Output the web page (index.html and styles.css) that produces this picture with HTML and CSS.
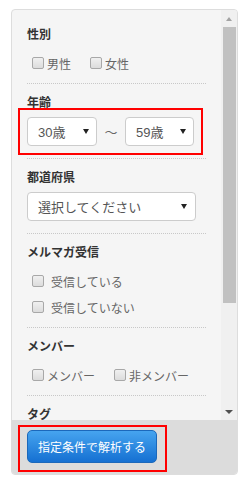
FILE: index.html
```html
<!DOCTYPE html>
<html lang="ja">
<head>
    <meta charset="UTF-8">
    <meta name="viewport" content="width=device-width, initial-scale=1.0">
    <title>絞り込み条件</title>
    <link rel="stylesheet" href="styles.css">
</head>
<body>
    <div class="panel">
        <div class="scroller">
            <div class="content">
                <section class="group">
                    <h3>性別</h3>
                    <div class="checks inline">
                        <label class="check"><span class="box"></span>男性</label>
                        <label class="check"><span class="box"></span>女性</label>
                    </div>
                </section>

                <section class="group with-select">
                    <h3>年齢</h3>
                    <div class="range">
                        <div class="select short"><span>30歳</span><span class="caret"></span></div>
                        <span class="tilde">～</span>
                        <div class="select short second"><span>59歳</span><span class="caret"></span></div>
                    </div>
                </section>

                <section class="group with-select">
                    <h3>都道府県</h3>
                    <div class="select wide"><span>選択してください</span><span class="caret"></span></div>
                </section>

                <section class="group">
                    <h3>メルマガ受信</h3>
                    <div class="checks list">
                        <label class="check"><span class="box"></span>受信している</label>
                        <label class="check"><span class="box"></span>受信していない</label>
                    </div>
                </section>

                <section class="group">
                    <h3>メンバー</h3>
                    <div class="checks inline">
                        <label class="check"><span class="box"></span>メンバー</label>
                        <label class="check"><span class="box"></span>非メンバー</label>
                    </div>
                </section>

                <section class="group last">
                    <h3>タグ</h3>
                </section>
            </div>

            <div class="scrollbar">
                <div class="step up"></div>
                <div class="track"><div class="thumb"></div></div>
                <div class="step down"></div>
            </div>
        </div>

        <div class="footer">
            <div class="mark">
                <button class="submit" type="button">指定条件で解析する</button>
            </div>
        </div>
    </div>
</body>
</html>
```

FILE: styles.css
```css
body {
    margin: 0;
    background: #fff;
    font-family: "Liberation Sans", "Noto Sans CJK JP", sans-serif;
    color: #555;
}

.panel {
    box-sizing: border-box;
    width: 227px;
    height: 466px;
    margin: 9px 0 0 11px;
    border: 1px solid #ddd;
    border-radius: 4px;
    overflow: hidden;
    display: flex;
    flex-direction: column;
    background: #f5f5f5;
}

.scroller {
    display: flex;
    height: 410px;
}

.content {
    flex: 1;
    overflow: hidden;
    padding: 6px 15px 0;
}

.group {
    padding-top: 10px;
    border-bottom: 1px dotted #c8c8c8;
}

.group.with-select {
    padding-bottom: 12px;
}

.group.last {
    border-bottom: none;
}

.group h3 {
    margin: 0 0 5px;
    font-size: 12px;
    line-height: 18px;
    font-weight: bold;
    color: #333;
}

/* checkboxes */
.checks {
    padding: 1px 0 7px 5px;
}

.checks.inline {
    display: flex;
    gap: 19px;
}

.check {
    display: flex;
    align-items: center;
    height: 26px;
    font-size: 12px;
    color: #666;
}

.box {
    width: 10px;
    height: 10px;
    margin-right: 3px;
    border: 1px solid #a8a8a8;
    border-radius: 2px;
    background: linear-gradient(#f0f0f0, #dcdcdc);
}

.checks.list .box {
    margin-right: 7px;
}

/* selects */
.range {
    display: flex;
    align-items: center;
    width: fit-content;
    outline: 2px solid #f00;
    outline-offset: 7px;
}

.select {
    box-sizing: border-box;
    height: 29px;
    display: flex;
    align-items: center;
    justify-content: space-between;
    padding: 0 7px 0 10px;
    border: 1px solid #ccc;
    border-radius: 4px;
    background: #fff;
    font-size: 13px;
    color: #555;
}

.select.short {
    width: 70px;
}

.select.second {
    width: 69px;
}

.select.wide {
    width: 169px;
    padding-right: 8px;
}

.caret {
    width: 0;
    height: 0;
    border-left: 3px solid transparent;
    border-right: 3px solid transparent;
    border-top: 5px solid #222;
}

.tilde {
    width: 28px;
    text-align: center;
    font-size: 13px;
    color: #666;
}

/* scrollbar */
.scrollbar {
    width: 16px;
    display: flex;
    flex-direction: column;
    background: #f0f0f0;
}

.step {
    height: 17px;
    display: flex;
    justify-content: center;
    align-items: center;
}

.step.up::before {
    content: "";
    border-left: 3.5px solid transparent;
    border-right: 3.5px solid transparent;
    border-bottom: 4px solid #a3a3a3;
}

.step.down::before {
    content: "";
    border-left: 4px solid transparent;
    border-right: 4px solid transparent;
    border-top: 4px solid #505050;
}

.track {
    flex: 1;
}

.thumb {
    width: 13px;
    height: 276px;
    margin-left: 2px;
    background: #c1c1c1;
}

/* footer */
.footer {
    flex: 1;
    padding: 5px 0 0 6px;
    background: #dcdcdc;
}

.mark {
    display: flex;
    width: fit-content;
    padding: 3px 8px 7px 7px;
    border: 2px solid #f00;
}

.submit {
    width: 130px;
    height: 33px;
    padding: 0;
    border: 1px solid #1b68bb;
    border-radius: 5px;
    background: linear-gradient(#46a4ef, #1570d2);
    color: #fff;
    font-family: inherit;
    font-size: 12px;
    cursor: pointer;
}
```
